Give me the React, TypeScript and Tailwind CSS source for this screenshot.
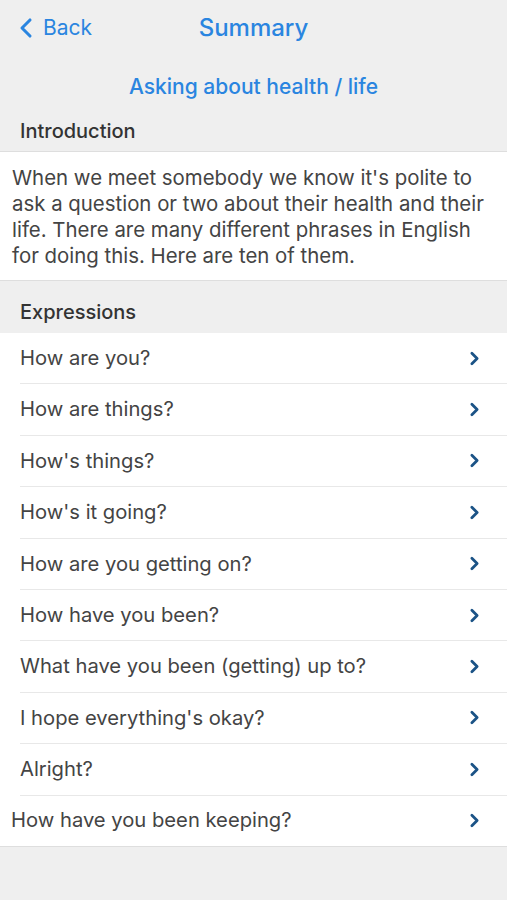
import { ChevronLeft, ChevronRight } from 'lucide-react';

const expressions = [
  'How are you?',
  'How are things?',
  "How's things?",
  "How's it going?",
  'How are you getting on?',
  'How have you been?',
  'What have you been (getting) up to?',
  "I hope everything's okay?",
  'Alright?',
];

const App = () => {
  return (
    <div className="min-h-[900px] w-full bg-[#efefef] font-['Inter',sans-serif] text-[#3d3d3d]">
      {/* Nav bar */}
      <div className="relative flex h-[55px] items-center justify-center">
        <div className="absolute left-[10px] top-0 flex h-full items-center text-[#2a85e0]">
          <ChevronLeft className="h-[32px] w-[32px]" strokeWidth={2.3} />
          <span className="ml-[1px] text-[21px]">Back</span>
        </div>
        <h1 className="text-[24px] font-medium text-[#2a85e0]">Summary</h1>
      </div>

      <div className="flex h-[63px] items-start justify-center pt-[18px]">
        <h2 className="text-[21px] font-medium leading-[28px] text-[#2a85e0]">Asking about health / life</h2>
      </div>

      <div className="flex h-[33px] items-start px-5">
        <h3 className="text-[20px] font-medium leading-[26px] text-[#333]">Introduction</h3>
      </div>

      <div className="border-y border-[#dedede] bg-white px-3 pt-[13px] pb-[11px]">
        <p className="text-[20.4px] leading-[26px] text-[#444]">
          When we meet somebody we know it's polite to ask a question or two about their health and their life. There
          are many different phrases in English for doing this. Here are ten of them.
        </p>
      </div>

      <div className="flex h-[52px] items-end px-5 pb-[8px]">
        <h3 className="text-[20px] font-medium leading-[26px] text-[#333]">Expressions</h3>
      </div>

      <ul className="border-b border-[#dedede] bg-white">
        {expressions.map((e) => (
          <li key={e} className="ml-5 flex h-[51.4px] items-center border-b border-[#e8e8e8] pr-[22px]">
            <span className="flex-1 text-[20.2px] text-[#444]">{e}</span>
            <ChevronRight className="h-[21px] w-[21px] text-[#1b5386]" strokeWidth={3.2} />
          </li>
        ))}
        <li className="flex h-[50px] items-center pl-[11px] pr-[22px]">
          <span className="flex-1 text-[20.2px] text-[#444]">How have you been keeping?</span>
          <ChevronRight className="h-[21px] w-[21px] text-[#1b5386]" strokeWidth={3.2} />
        </li>
      </ul>
    </div>
  );
};

export default App;
